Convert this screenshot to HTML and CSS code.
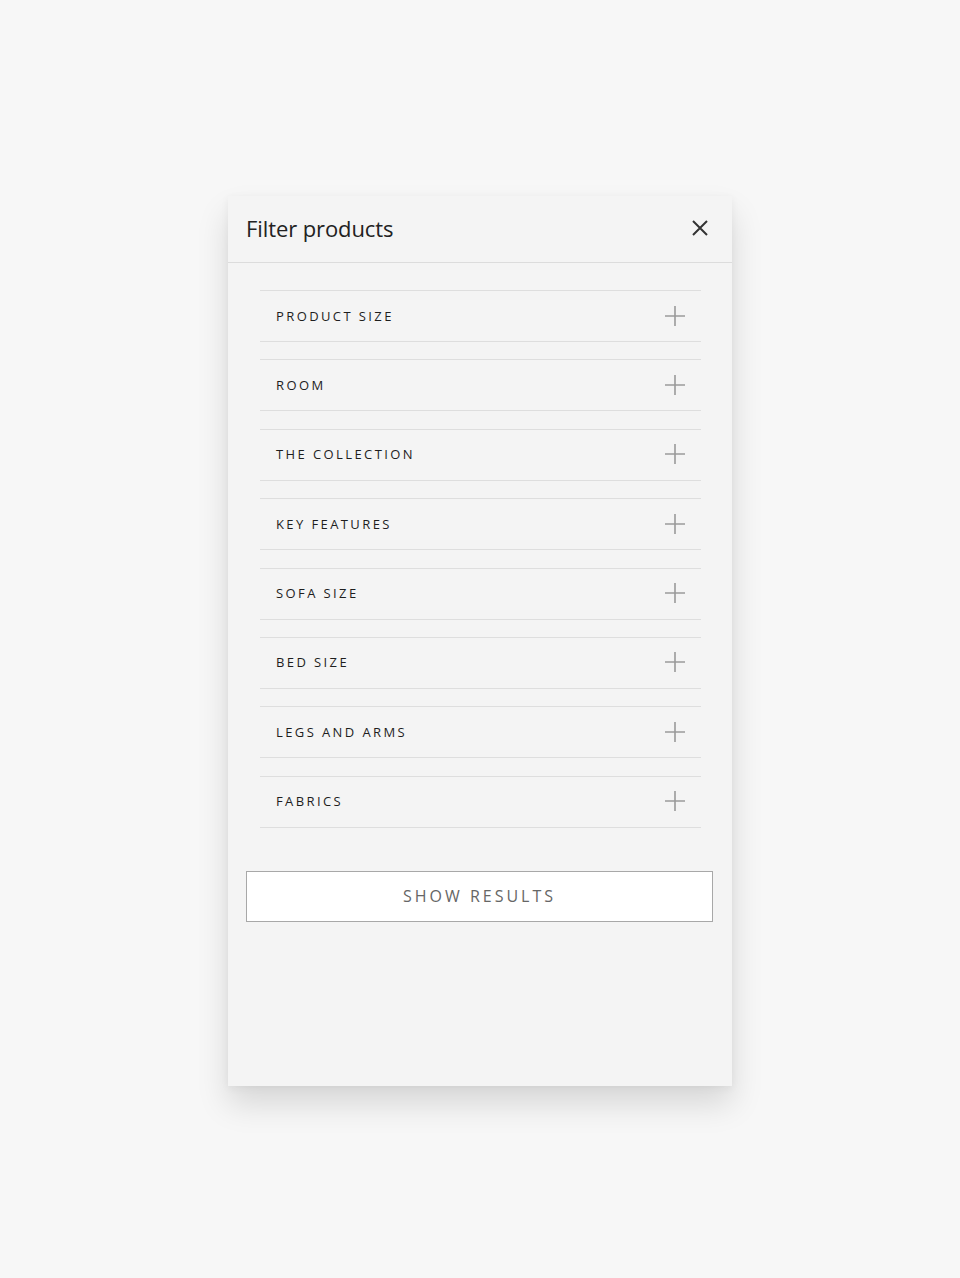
FILE: index.html
```html
<!DOCTYPE html>
<html>
<head>
<meta charset="utf-8">
<link rel="stylesheet" href="styles.css">
</head>
<body>
<div class="panel">
  <div class="header">
    <h1 class="title">Filter products</h1>
    <button class="close" aria-label="Close">
      <svg width="18" height="18" viewBox="0 0 18 18"><path d="M2 2 L16 16 M16 2 L2 16" stroke="#333" stroke-width="2" fill="none"/></svg>
    </button>
  </div>
  <div class="filters">
    <div class="row"><span>Product size</span><svg class="plus" viewBox="0 0 22 22"><path d="M11 1 V21 M1 11 H21" stroke="#9a9a9a" stroke-width="1.6" fill="none"/></svg></div>
    <div class="row"><span>Room</span><svg class="plus" viewBox="0 0 22 22"><path d="M11 1 V21 M1 11 H21" stroke="#9a9a9a" stroke-width="1.6" fill="none"/></svg></div>
    <div class="row"><span>The collection</span><svg class="plus" viewBox="0 0 22 22"><path d="M11 1 V21 M1 11 H21" stroke="#9a9a9a" stroke-width="1.6" fill="none"/></svg></div>
    <div class="row"><span>Key features</span><svg class="plus" viewBox="0 0 22 22"><path d="M11 1 V21 M1 11 H21" stroke="#9a9a9a" stroke-width="1.6" fill="none"/></svg></div>
    <div class="row"><span>Sofa size</span><svg class="plus" viewBox="0 0 22 22"><path d="M11 1 V21 M1 11 H21" stroke="#9a9a9a" stroke-width="1.6" fill="none"/></svg></div>
    <div class="row"><span>Bed size</span><svg class="plus" viewBox="0 0 22 22"><path d="M11 1 V21 M1 11 H21" stroke="#9a9a9a" stroke-width="1.6" fill="none"/></svg></div>
    <div class="row"><span>Legs and arms</span><svg class="plus" viewBox="0 0 22 22"><path d="M11 1 V21 M1 11 H21" stroke="#9a9a9a" stroke-width="1.6" fill="none"/></svg></div>
    <div class="row"><span>Fabrics</span><svg class="plus" viewBox="0 0 22 22"><path d="M11 1 V21 M1 11 H21" stroke="#9a9a9a" stroke-width="1.6" fill="none"/></svg></div>
  </div>
  <button class="show">Show results</button>
</div>
</body>
</html>
```

FILE: styles.css
```css
html, body {
  margin: 0;
  padding: 0;
  background: #f7f7f7;
  font-family: "Open Sans", "Noto Sans", sans-serif;
}
body {
  padding-top: 196px;
  height: 1278px;
  box-sizing: border-box;
}
.panel {
  width: 504px;
  height: 890px;
  margin: 0 auto;
  background: #f4f4f4;
  box-shadow: 0 18px 30px rgba(0,0,0,0.13), 0 2px 8px rgba(0,0,0,0.05);
  box-sizing: border-box;
}
.header {
  height: 67px;
  border-bottom: 1px solid #dcdcdc;
  display: flex;
  align-items: center;
  justify-content: space-between;
  padding: 0 23px 2px 18px;
  box-sizing: border-box;
}
.title {
  margin: 0;
  font-weight: 400;
  font-size: 22px;
  color: #222;
  letter-spacing: -0.1px;
}
.close {
  background: none;
  border: 0;
  padding: 0;
  width: 18px;
  height: 18px;
  display: flex;
}
.filters {
  padding: 27px 31px 0 32px;
  display: flex;
  flex-direction: column;
  gap: 17.4px;
}
.row {
  height: 52px;
  box-sizing: border-box;
  border-top: 1px solid #dedede;
  border-bottom: 1px solid #dedede;
  display: flex;
  align-items: center;
  justify-content: space-between;
  padding: 0 15px 1px 16px;
}
.row span {
  text-transform: uppercase;
  font-size: 13px;
  letter-spacing: 2.4px;
  color: #1e1e1e;
  font-weight: 500;
}
.plus {
  width: 22px;
  height: 22px;
}
.show {
  display: block;
  margin: 43px 19px 0 18px;
  width: 467px;
  height: 51px;
  background: #fff;
  border: 1.5px solid #a8a8a8;
  text-transform: uppercase;
  font-family: "Open Sans", "Noto Sans", sans-serif;
  font-size: 16px;
  letter-spacing: 3px;
  color: #666;
  padding: 0;
}
```
